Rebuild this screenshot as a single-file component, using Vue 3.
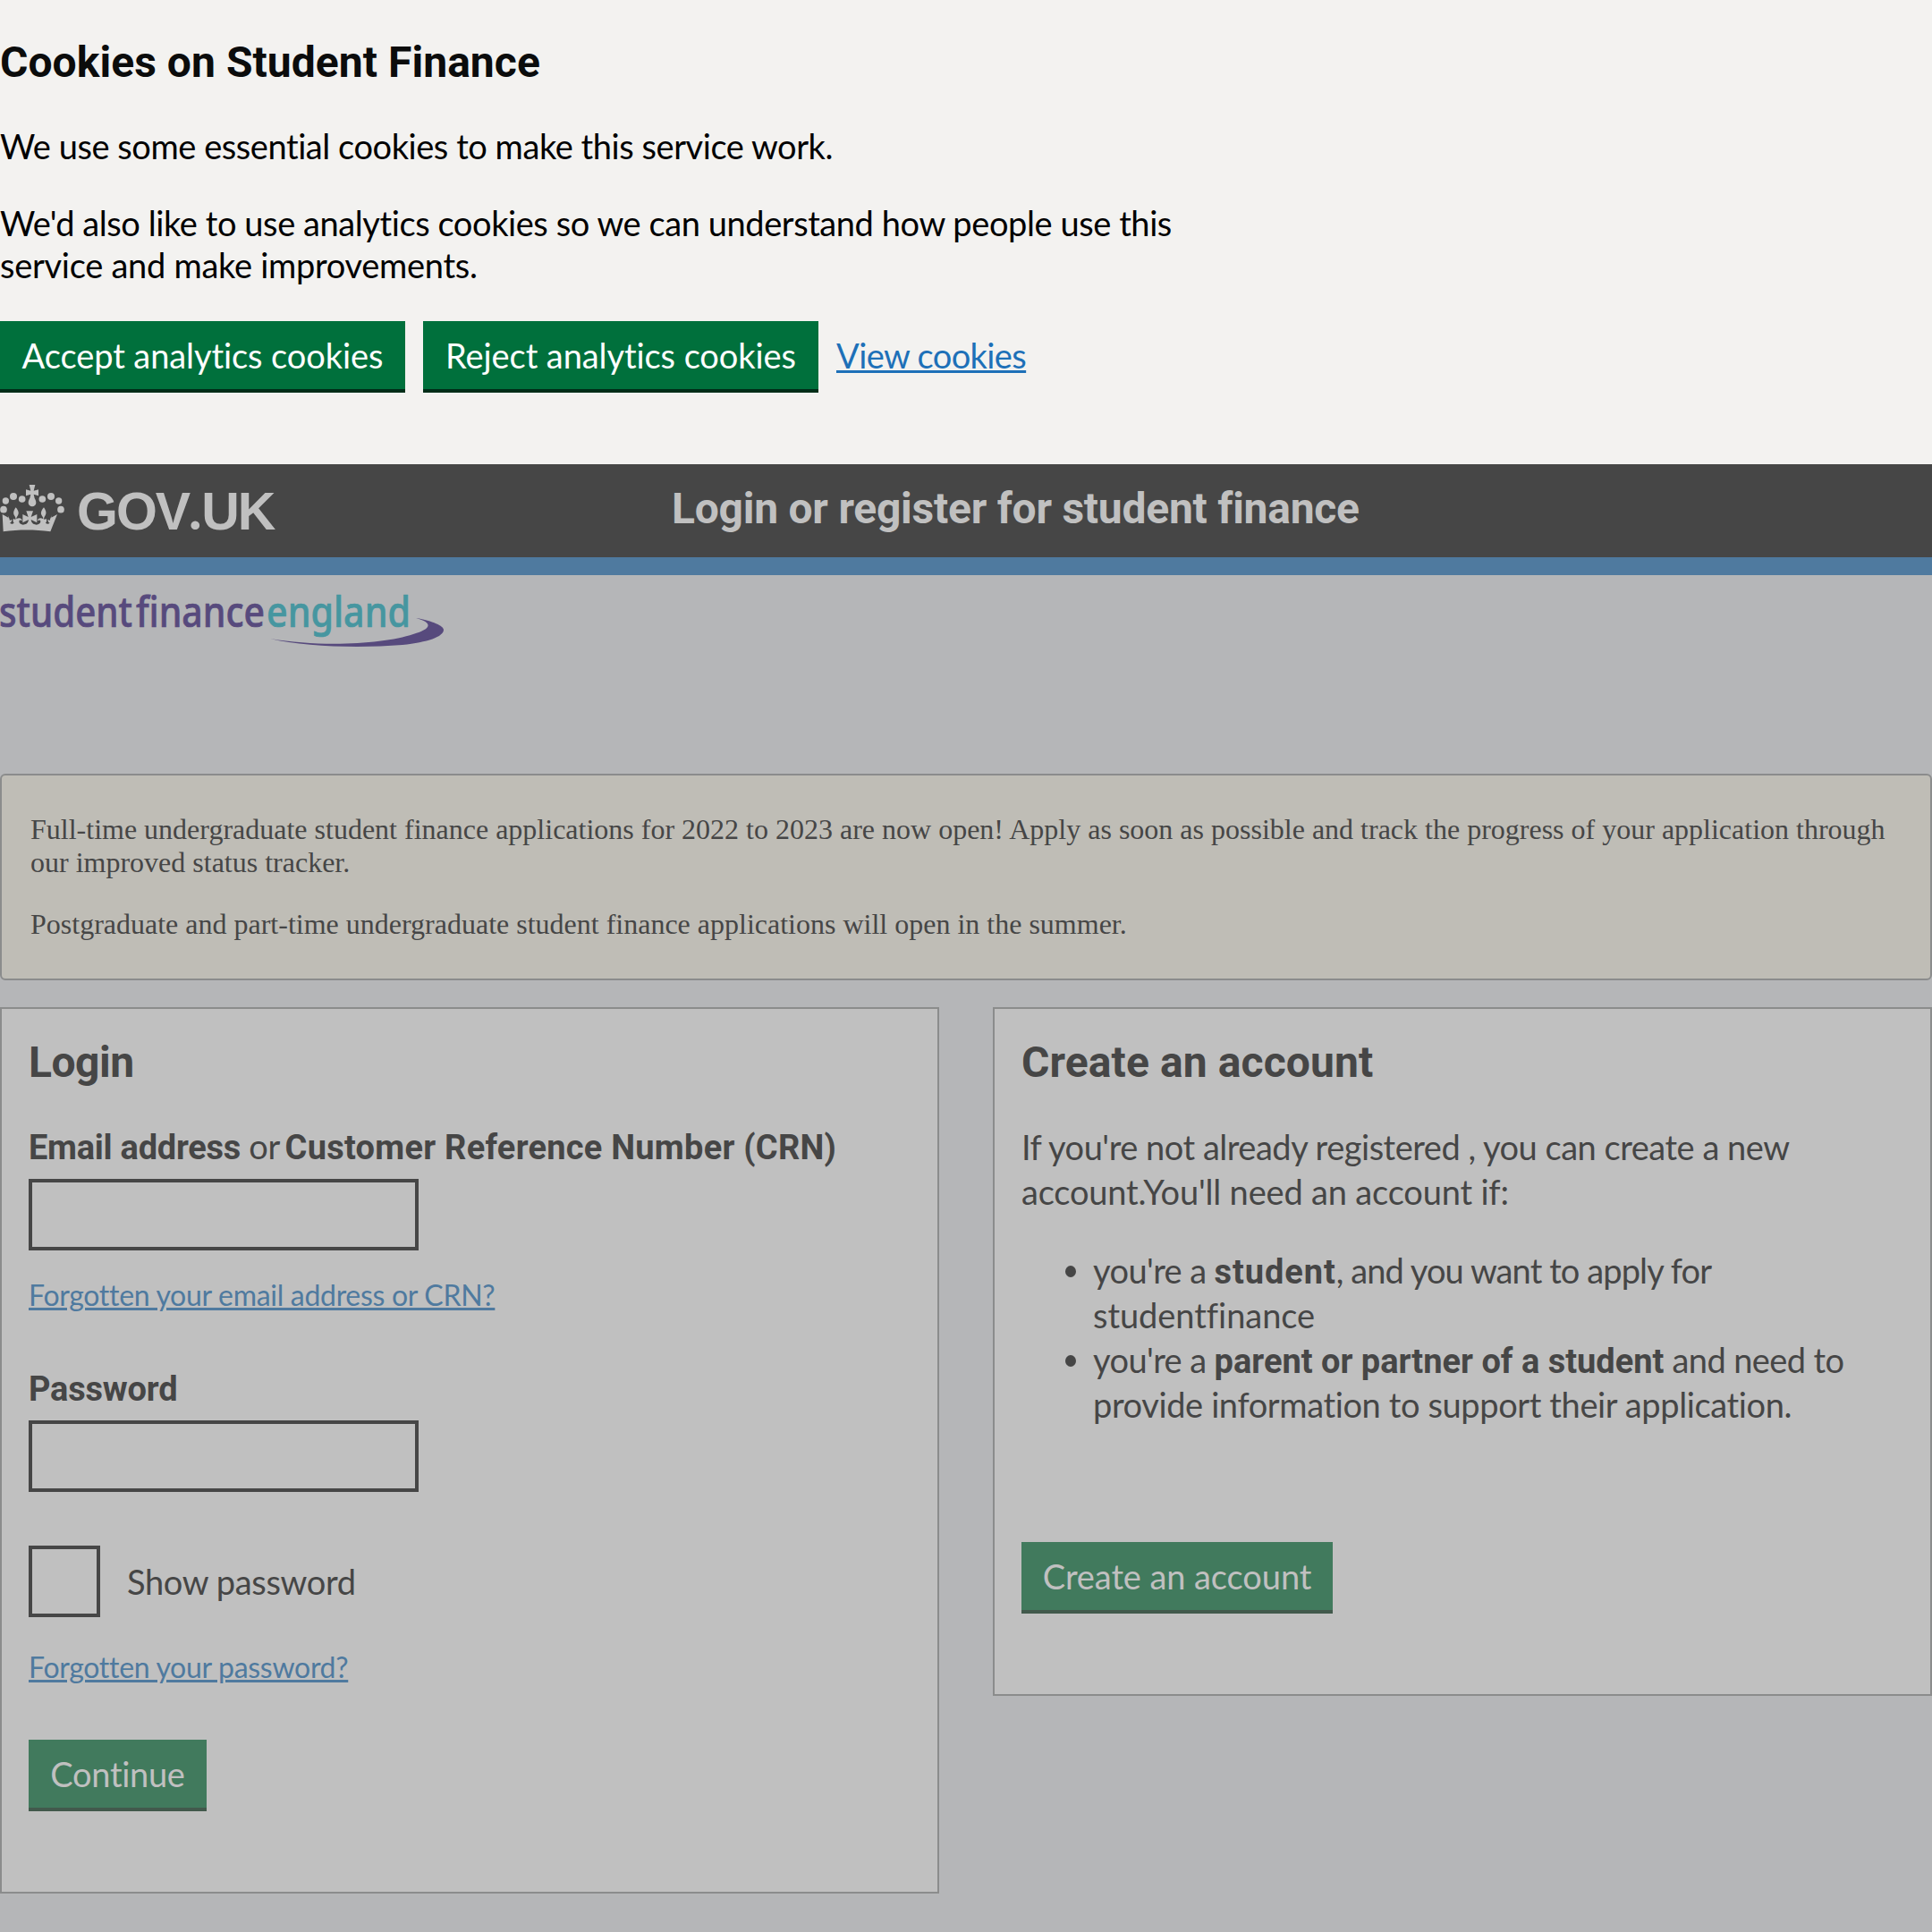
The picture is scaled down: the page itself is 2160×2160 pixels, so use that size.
<script setup>
import { ref } from 'vue'

const identifier = ref('')
const password = ref('')
const showPassword = ref(false)
</script>

<template>
  <div class="page">
    <section class="cookie-banner" aria-label="Cookies on Student Finance">
      <h2 class="heading cookie-title">Cookies on Student Finance</h2>
      <p>We use some essential cookies to make this service work.</p>
      <p class="analytics">
        We'd also like to use analytics cookies so we can understand how people use this<br />
        <span class="second-line">service and make improvements.</span>
      </p>
      <div class="cookie-actions">
        <button class="button accept">Accept analytics cookies</button>
        <button class="button reject">Reject analytics cookies</button>
        <a class="link view" href="#">View cookies</a>
      </div>
    </section>

    <header class="header">
      <a class="brand" href="#">
        <svg class="crown" viewBox="0 0 216 159" aria-hidden="true">
          <circle cx="19" cy="54" r="11" />
          <circle cx="45" cy="39" r="12" />
          <circle cx="74" cy="48" r="11.5" />
          <circle cx="142" cy="48" r="11.5" />
          <circle cx="171" cy="39" r="12" />
          <circle cx="197" cy="54" r="11" />
          <circle cx="12" cy="83" r="11.5" />
          <circle cx="204" cy="83" r="11.5" />
          <path d="M98 0h20l-5 20 16-4v21l-16-5 3 13c3 5 5 10 5 15a13 13 0 0 1-26 0c0-5 2-10 5-15l3-13-16 5V16l16 4z" />
          <path d="M8 99 28 110 26 102c3 7 6 12 7 18l7-4c-1 8-3 10-7 12 5 4 10 4 14 0-4-5-5-10-1-15 2 3 5 4 7 2-1-5-2-8-4-11-5-7-5-15 4-28 11 13 11 21 6 28-3 4-4 7-4 11 8-6 19-3 19 6-5-4-10-3-10 2 0 8 10 13 19 10 8-2 12-7 13-16l-20 10V99l19 9-7-20h23l-7 20 20-9v28l-20-10c1 9 5 14 13 16 9 3 19-2 19-10 0-5-5-6-10-2 0-9 11-12 19-6 0-4-1-7-4-11-5-7-5-15 6-28 9 13 9 21 4 28-2 3-3 6-4 11 2 2 5 1 7-2 4 5 3 10-1 15 4 4 9 4 14 0-4-2-6-4-7-12l7 4c1-6 4-11 7-18l-2 8 20-11-23 58c-52-7-106-7-158 0z" />
        </svg>
        <span class="brand-name">GOV<span class="dot">.</span>UK</span>
      </a>
      <span class="service-name">Login or register for student finance</span>
    </header>

    <div class="logo-row">
      <svg class="sfe-logo" viewBox="0 0 500 90" width="500" height="90" role="img" aria-label="student finance england">
        <g class="logo-text">
          <text class="purple" x="-1" y="58" textLength="149" lengthAdjust="spacingAndGlyphs">student</text>
          <text class="purple" x="152" y="58" textLength="144" lengthAdjust="spacingAndGlyphs">finance</text>
          <text class="teal" x="298" y="58" textLength="161" lengthAdjust="spacingAndGlyphs">england</text>
        </g>
        <path class="swoosh" d="M302 71C360 81 430 77 462 66C483 60 484 53 465 48C484 51 496 57 496 61C496 69 478 75 450 78C400 82 340 80 302 71Z" />
      </svg>
    </div>

    <div class="notice">
      <p>
        Full-time undergraduate student finance applications for 2022 to 2023 are now open! Apply as soon as possible and track the progress of your application through
        our improved status tracker.
      </p>
      <p>Postgraduate and part-time undergraduate student finance applications will open in the summer.</p>
    </div>

    <main class="panels">
      <form class="panel login" @submit.prevent>
        <h1 class="heading login-title">Login</h1>
        <label class="label" for="identifier"><strong class="email">Email address</strong> or <strong class="crn">Customer Reference Number (CRN)</strong></label>
        <input id="identifier" v-model="identifier" class="field" type="text" />
        <a class="link small forgot-id" href="#">Forgotten your email address or CRN?</a>
        <label class="label" for="password"><strong class="pw">Password</strong></label>
        <input id="password" v-model="password" class="field" :type="showPassword ? 'text' : 'password'" />
        <label class="check">
          <input v-model="showPassword" class="box" type="checkbox" />
          <span>Show password</span>
        </label>
        <a class="link small forgot-pw" href="#">Forgotten your password?</a>
        <button class="button muted continue">Continue</button>
      </form>

      <section class="panel create">
        <h1 class="heading create-title">Create an account</h1>
        <p>
          <span class="l1">If you're not already registered , you can create a new</span><br />
          <span class="l2">account.You'll need an account if:</span>
        </p>
        <ul>
          <li>
            <span class="who">you're a </span><strong class="s1">student</strong><span class="l3">, and you want to apply for</span><br />
            <span class="l4">studentfinance</span>
          </li>
          <li>
            <span class="who">you're a </span><strong>parent or partner of a student</strong><span class="l5"> and need to</span><br />
            <span class="l6">provide information to support their application.</span>
          </li>
        </ul>
        <button class="button muted register">Create an account</button>
      </section>
    </main>
  </div>
</template>

<style>
body {
  margin: 0;
  background: #b5b6b8;
}
</style>

<style scoped>
.page {
  width: 2160px;
  height: 2160px;
  overflow: hidden;
  background: #b5b6b8;
  color: #464646;
  font: 400 38px/50px Lato, "Noto Sans", sans-serif;
  letter-spacing: -0.35px;
}
.page * {
  box-sizing: border-box;
}
p,
ul {
  margin: 0;
  padding: 0;
}
strong {
  font-family: Roboto, sans-serif;
  font-weight: 700;
  line-height: 1;
  letter-spacing: 0;
}
.heading {
  margin: 0;
  font: 700 48px/60px Roboto, sans-serif;
  letter-spacing: 0;
}

/* Cookie banner */
.cookie-banner {
  height: 519px;
  padding-top: 40px;
  background: #f3f2f0;
  color: #0b0c0c;
}
.cookie-title {
  letter-spacing: 0.05px;
}
.cookie-banner p {
  margin-top: 40px;
  line-height: 47px;
  letter-spacing: -0.44px;
  color: #000;
}
.cookie-banner .analytics {
  margin-top: 39px;
  letter-spacing: -0.42px;
}
.cookie-banner .second-line {
  letter-spacing: -0.28px;
}
.cookie-actions {
  display: flex;
  gap: 20px;
  margin-top: 39px;
}
.button {
  display: block;
  height: 80px;
  padding: 0;
  border: 0;
  border-bottom: 4px solid #002d18;
  border-radius: 0;
  background: #00703c;
  color: #fff;
  font: 400 38px/75px Lato, "Noto Sans", sans-serif;
  letter-spacing: -0.08px;
  text-align: center;
  white-space: nowrap;
}
.accept {
  width: 453px;
}
.reject {
  width: 442px;
}
.link {
  color: #1d70b8;
  text-decoration: underline;
  text-decoration-thickness: 3px;
  text-underline-offset: 2px;
}
.view {
  line-height: 77px;
  letter-spacing: -0.6px;
}

/* Header */
.header {
  display: flex;
  height: 124px;
  border-bottom: 20px solid #4f7a9f;
  background: #464646;
  color: #c0c0c0;
}
.brand {
  display: flex;
  width: 751px;
  color: inherit;
  text-decoration: none;
}
.crown {
  width: 72px;
  height: 53px;
  margin-top: 23px;
  fill: #c0c0c0;
}
.brand-name {
  margin-left: 14px;
  font: 700 59px/106px "Liberation Sans", sans-serif;
  font-kerning: none;
  letter-spacing: -2px;
}
.dot {
  font: 900 59px/1 Lato, sans-serif;
  letter-spacing: 0;
}
.service-name {
  font: 700 48px/99px Roboto, sans-serif;
  letter-spacing: -0.25px;
}

/* Organisation logo */
.logo-row {
  height: 222px;
}
.sfe-logo {
  display: block;
}
.logo-text {
  font: 500 47px "Noto Sans", sans-serif;
  letter-spacing: 0;
}
.purple {
  fill: #574a7d;
  stroke: #574a7d;
  stroke-width: 0.7px;
}
.teal {
  fill: #4696a0;
  stroke: #4696a0;
  stroke-width: 0.7px;
}
.swoosh {
  fill: #574a7d;
}

/* Notice */
.notice {
  height: 231px;
  padding: 42px 32px 0;
  border: 2px solid #8b8c8c;
  border-radius: 6px;
  background: #bfbdb6;
  font: 32px/37px "Liberation Serif", serif;
  letter-spacing: 0;
}
.notice p + p {
  margin-top: 32px;
}

/* Panels */
.panels {
  display: flex;
  align-items: flex-start;
  gap: 60px;
  margin-top: 30px;
}
.panel {
  display: flex;
  flex-direction: column;
  align-items: flex-start;
  width: 1050px;
  padding: 30px;
  border: 2px solid #8b8c8c;
  background: #c0c0c0;
}
.login {
  height: 991px;
}
.create {
  height: 770px;
}
.login-title {
  letter-spacing: -0.5px;
}
.label {
  margin-top: 38px;
  white-space: nowrap;
}
.email {
  letter-spacing: -0.27px;
}
.crn {
  margin-left: -3px;
  letter-spacing: 0.25px;
}
.pw {
  letter-spacing: -0.2px;
}
.field {
  width: 436px;
  height: 80px;
  margin: 12px 0 0;
  padding: 8px;
  border: 4px solid #464646;
  border-radius: 0;
  background: transparent;
}
.small {
  margin-top: 30px;
  color: #4f7a9f;
  font-size: 32px;
  line-height: 40px;
  letter-spacing: -0.3px;
}
.small + .label {
  margin-top: 58px;
}
.check {
  display: flex;
  align-items: center;
  gap: 30px;
  height: 80px;
  margin-top: 60px;
}
.box {
  appearance: none;
  width: 80px;
  height: 80px;
  margin: 0;
  border: 4px solid #464646;
}
.forgot-pw {
  margin-top: 36px;
}
.muted {
  border-bottom-color: #42594c;
  background: #417a5d;
  color: #c0c0c0;
}
.continue {
  width: 199px;
  margin-top: 61px;
  letter-spacing: -0.3px;
}
.create-title {
  letter-spacing: 0.1px;
}
.create p {
  margin-top: 39px;
  white-space: nowrap;
}
.create ul {
  margin-top: 38px;
  padding-left: 80px;
  list-style: none;
  white-space: nowrap;
}
.l1 {
  letter-spacing: -0.48px;
}
.l2 {
  letter-spacing: -0.18px;
}
.who {
  letter-spacing: -0.6px;
}
.l3 {
  letter-spacing: -0.9px;
}
.l4 {
  letter-spacing: -0.05px;
}
.l5 {
  letter-spacing: -0.6px;
}
.l6 {
  letter-spacing: -0.38px;
}
.s1 {
  letter-spacing: 0.9px;
}
li {
  position: relative;
}
li::before {
  content: "";
  position: absolute;
  left: -31px;
  top: 20px;
  width: 12px;
  height: 13px;
  border-radius: 50%;
  background: #464646;
}
.register {
  width: 348px;
  margin-top: 129px;
}
</style>
